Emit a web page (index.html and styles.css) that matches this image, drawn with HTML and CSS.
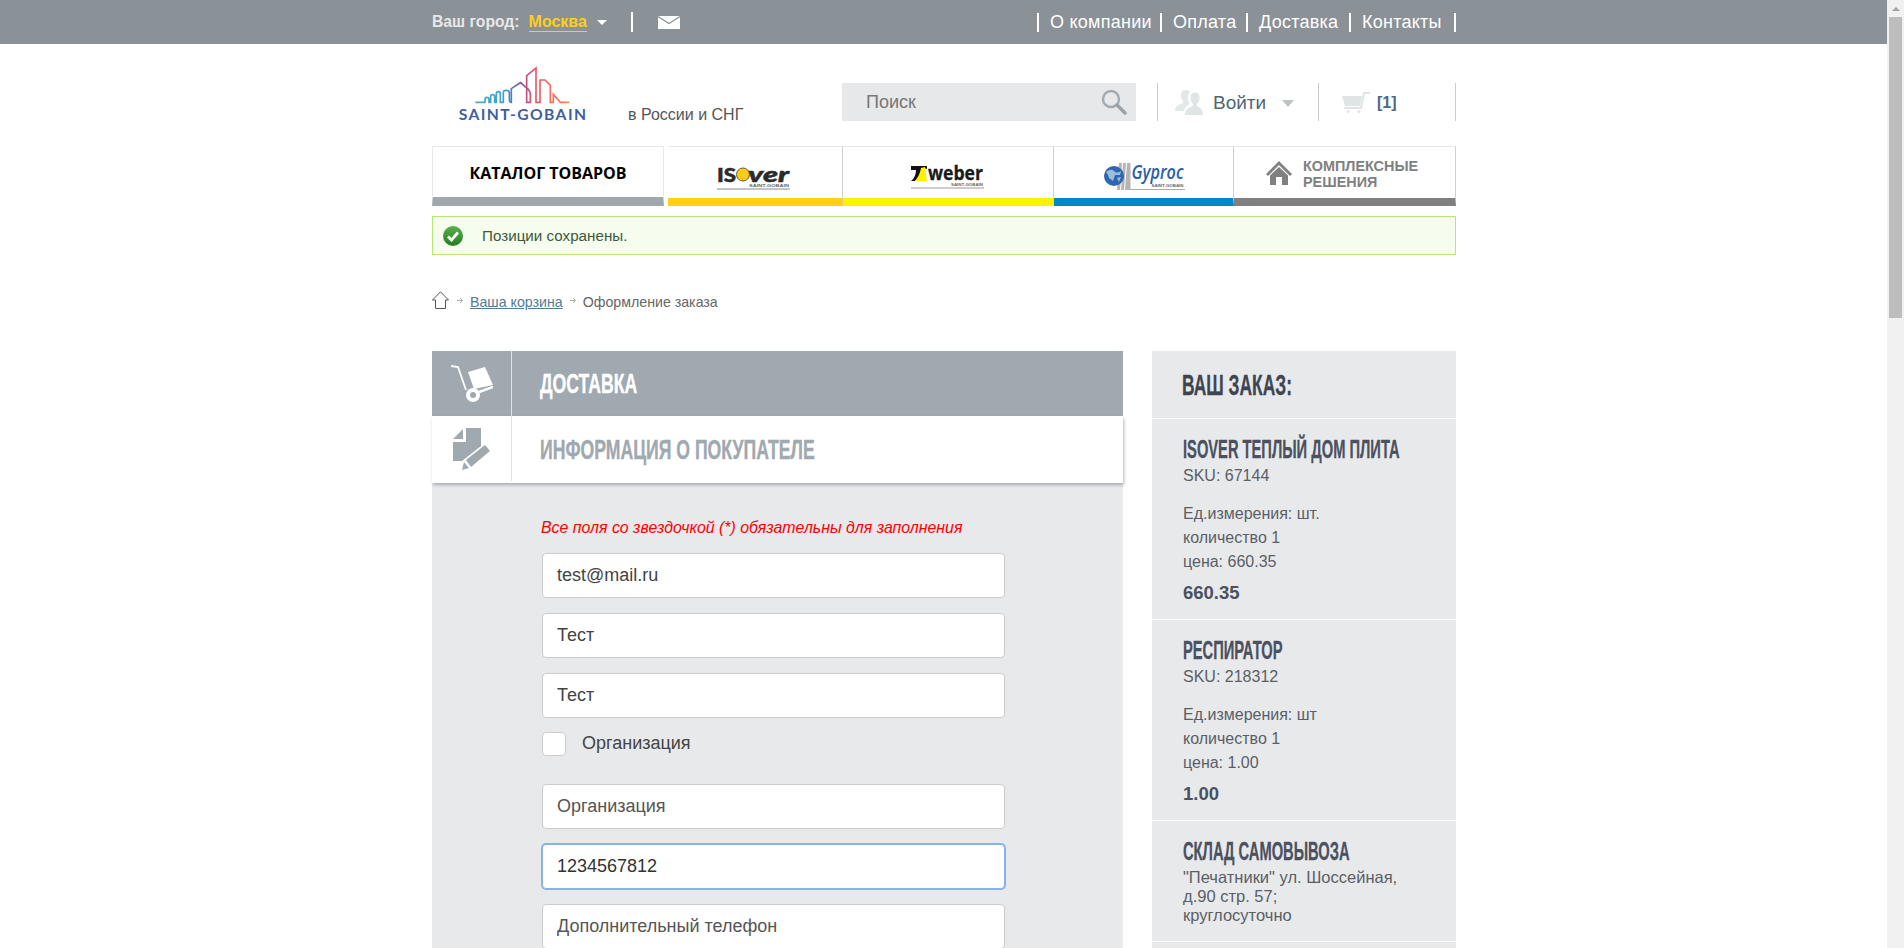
FILE: index.html
```html
<!DOCTYPE html>
<html lang="ru">
<head>
<meta charset="utf-8">
<title>Оформление заказа</title>
<link rel="stylesheet" href="styles.css">
</head>
<body>
<div class="page">
  <div class="topbar">
    <div class="wrap topbar-in">
      <div class="city">
        <span class="city-label">Ваш город:</span>
        <a class="city-name">Москва</a>
        <span class="city-caret"></span>
        <span class="city-sep"></span>
        <svg class="mail" width="22" height="13" viewBox="0 0 22 13"><path d="M0 0H22V13H0Z" fill="#fff"/><path d="M0 .5L11 7.5L22 .5" fill="none" stroke="#8a9197" stroke-width="1.2"/></svg>
      </div>
      <ul class="topnav">
        <li class="nav-about">О компании</li><li class="nav-pay">Оплата</li><li class="nav-ship">Доставка</li><li class="nav-contact">Контакты</li>
      </ul>
    </div>
  </div>

  <div class="wrap">
    <header class="head">
      <svg class="logo" width="145" height="62" viewBox="0 0 435 186">
        <defs><linearGradient id="sky" x1="75" x2="360" y1="0" y2="0" gradientUnits="userSpaceOnUse">
          <stop offset="0" stop-color="#3fb5ad"/><stop offset=".3" stop-color="#3f9fd8"/><stop offset=".47" stop-color="#6b5aa0"/><stop offset=".6" stop-color="#f0506a"/><stop offset="1" stop-color="#fb8a50"/>
        </linearGradient></defs>
        <path d="M76 127H105V118Q105 112 111 112Q117 112 117 118V127H122V110Q122 104 128 104Q134 104 134 110V127H139V101Q139 95 145 95Q151 95 151 101V127H160V97Q160 91 168 91Q178 91 178 97V120Q178 127 184 127V86L212 68L230 84Q241 92 241 104V127H230V47L258 24V127H270V60H285L301 76V127H310V103L331 127H358" fill="none" stroke="url(#sky)" stroke-width="5"/>
        <text class="logo-text" x="26" y="180" textLength="382">SAINT-GOBAIN</text>
      </svg>
      <span class="region">в России и СНГ</span>
      <div class="search">
        <span class="search-text">Поиск</span>
        <svg width="26" height="26" viewBox="0 0 26 26"><circle cx="10" cy="10" r="8" fill="none" stroke="#a3abb1" stroke-width="2.4"/><path d="M16 16L24 24" stroke="#9aa2a8" stroke-width="3.4" stroke-linecap="round"/></svg>
      </div>
      <div class="login">
        <svg width="30" height="26" viewBox="0 0 30 26"><path d="M2 21Q2 17 8 15Q11 14 10 12Q7 9 8 5Q9 1 13 1Q16 1 17.500 3Q14 5 15 10Q15 13 17 15Q12 17 11 22H2Z" fill="#e3e8e8"/><path d="M12 26Q12 20 18 18Q21 17 20 15Q17 12 17.500 8Q18 3.500 22 3.500Q26 3.500 26.500 8Q27 12 24 15Q23 17 26 18Q30 20 30 26Z" fill="#dfe5e5"/></svg>
        <span class="login-text">Войти</span>
        <span class="login-caret"></span>
      </div>
      <div class="cart">
        <svg width="28" height="22" viewBox="0 0 28 22"><path d="M0 5H20L18 15H3Z" fill="#dfe5e5"/><path d="M2.500 17H19L22 2H28" fill="none" stroke="#dfe5e5" stroke-width="2"/><circle cx="6" cy="20.500" r="1.500" fill="#dfe5e5"/><circle cx="17" cy="20.500" r="1.500" fill="#dfe5e5"/></svg>
        <span class="cart-count">[1]</span>
      </div>
    </header>

    <nav class="tabs">
      <a class="tab tab-catalog"><span class="tab-body catalog-text">КАТАЛОГ ТОВАРОВ</span></a>
      <a class="tab tab-isover"><span class="tab-body">
        <svg class="brand" width="76" height="34" viewBox="0 0 76 34">
          <text class="isover-caps" x="0" y="26" textLength="19" lengthAdjust="spacingAndGlyphs">IS</text>
          <circle cx="26" cy="18.500" r="6.500" fill="#ffcb16" stroke="#5f5a3a" stroke-width="1"/>
          <text class="isover" x="31" y="26" textLength="41" lengthAdjust="spacingAndGlyphs">ver</text>
          <text class="tiny" x="32" y="31" textLength="40" lengthAdjust="spacingAndGlyphs">SAINT-GOBAIN</text>
          <path d="M0 33H73" stroke="#888" stroke-width="1"/>
        </svg>
      </span></a>
      <a class="tab tab-weber"><span class="tab-body">
        <svg class="brand" width="76" height="34" viewBox="0 0 76 34">
          <path d="M1 10H17V13L13 12Q11 20 5 25H1Q6 21 6 14H1Z" fill="#111"/><path d="M11 12L15 11L17 25H5Q10 19 11 12Z" fill="#fff200"/>
          <text class="weber" x="18" y="24" textLength="55" lengthAdjust="spacingAndGlyphs">weber</text>
          <text class="tiny" x="41" y="30" textLength="32" lengthAdjust="spacingAndGlyphs">SAINT-GOBAIN</text>
          <path d="M1 32H74" stroke="#999" stroke-width="1"/>
        </svg>
      </span></a>
      <a class="tab tab-gyproc"><span class="tab-body">
        <svg class="brand" width="82" height="34" viewBox="0 0 82 34">
          <path d="M16 7H19L17 34H14ZM20 7H23L21 34H18ZM24 7H27.500V34H22Z" fill="#b5b5b5"/>
          <path d="M27 33.500H82" stroke="#aaa" stroke-width="1"/>
          <circle cx="11" cy="20" r="10" fill="#2f66ad"/><path d="M3 16Q8 12 11 15T18 15L17 19L12 19L10 25L6 22L5 19Z M14 22L18 21L16 26Z" fill="#9dbde0"/>
          <text class="gyproc" x="28.500" y="23" textLength="52" lengthAdjust="spacingAndGlyphs">Gyproc</text>
          <text class="tiny" x="48.500" y="31" textLength="32" lengthAdjust="spacingAndGlyphs">SAINT-GOBAIN</text>
        </svg>
      </span></a>
      <a class="tab tab-complex"><span class="tab-body complex-body">
        <svg width="26" height="24" viewBox="0 0 26 24"><path d="M13 0L26 13L24 15L13 4L2 15L0 13Z" fill="#808080"/><path d="M4 14.500L13 6L22 14.500V24H16V16H10V24H4Z" fill="#808080"/></svg>
        <span class="complex-text">КОМПЛЕКСНЫЕ<br>РЕШЕНИЯ</span>
      </span></a>
    </nav>

    <div class="alert">
      <svg width="20" height="20" viewBox="0 0 20 20"><defs><linearGradient id="ok" x1="0" x2="0" y1="0" y2="1"><stop offset="0" stop-color="#5cb04a"/><stop offset="1" stop-color="#237d25"/></linearGradient></defs><circle cx="10" cy="10" r="10" fill="url(#ok)"/><path d="M5 10.500L8.500 14L15 6.500" fill="none" stroke="#fff" stroke-width="2.800"/></svg>
      <span>Позиции сохранены.</span>
    </div>

    <div class="crumbs">
      <svg width="17" height="18" viewBox="0 0 17 18"><path d="M.5 9L8.500 .8L16.500 9H13.500V17.500H3.500V9Z" fill="none" stroke="#555" stroke-width="1"/></svg>
      <svg class="crumb-arrow" width="6" height="7" viewBox="0 0 6 7"><path d="M0 3.500H5.500M3 1L5.500 3.500L3 6" fill="none" stroke="#aaa" stroke-width="1"/></svg>
      <a class="crumb-link">Ваша корзина</a>
      <svg class="crumb-arrow" width="6" height="7" viewBox="0 0 6 7"><path d="M0 3.500H5.500M3 1L5.500 3.500L3 6" fill="none" stroke="#aaa" stroke-width="1"/></svg>
      <span class="crumb-text">Оформление заказа</span>
    </div>

    <main class="columns">
      <section class="checkout">
        <div class="step step-done">
          <div class="step-icon">
            <svg width="42" height="38" viewBox="0 0 42 38"><path d="M0 1L7 2L15 25" fill="none" stroke="#fff" stroke-width="1.800"/><path d="M17 7L34 2L42 20L23 24Z" fill="#fff"/><path d="M28 27L42 22" stroke="#fff" stroke-width="2.500"/><circle cx="22" cy="30" r="5" fill="none" stroke="#fff" stroke-width="4"/></svg>
          </div>
          <h2 class="step-title"><span class="squeeze step-squeeze">ДОСТАВКА</span></h2>
        </div>
        <div class="step step-active">
          <div class="step-icon">
            <svg width="38" height="43" viewBox="0 0 38 43"><path d="M0 12H10V2Z" fill="#a0a8b0"/><path d="M13 1H28V19L9 34H0V15H13Z" fill="#a0a8b0"/><path d="M32 18L37 24L18 40L13 33Z" fill="#a0a8b0"/><path d="M11 35L16 41L9 43Z" fill="#a0a8b0"/></svg>
          </div>
          <h2 class="step-title"><span class="squeeze step-squeeze">ИНФОРМАЦИЯ О ПОКУПАТЕЛЕ</span></h2>
        </div>
        <form class="form">
          <p class="required">Все поля со звездочкой (*) обязательны для заполнения</p>
          <input class="field" type="text" value="test@mail.ru">
          <input class="field" type="text" value="Тест">
          <input class="field" type="text" value="Тест">
          <label class="check"><span class="check-box"></span><span class="check-label">Организация</span></label>
          <input class="field" type="text" placeholder="Организация">
          <input class="field field-focus" type="text" value="1234567812">
          <input class="field" type="text" placeholder="Дополнительный телефон">
        </form>
      </section>

      <aside class="order">
        <h2 class="order-title"><span class="squeeze">ВАШ ЗАКАЗ:</span></h2>
        <div class="order-item">
          <h3 class="item-title"><span class="squeeze item-squeeze">ISOVER ТЕПЛЫЙ ДОМ ПЛИТА</span></h3>
          <p class="item-sku">SKU: 67144</p>
          <p class="item-meta">Ед.измерения: шт.<br>количество 1<br>цена: 660.35</p>
          <p class="item-price">660.35</p>
        </div>
        <div class="order-item">
          <h3 class="item-title"><span class="squeeze item-squeeze">РЕСПИРАТОР</span></h3>
          <p class="item-sku">SKU: 218312</p>
          <p class="item-meta">Ед.измерения: шт<br>количество 1<br>цена: 1.00</p>
          <p class="item-price">1.00</p>
        </div>
        <div class="order-item">
          <h3 class="item-title"><span class="squeeze item-squeeze">СКЛАД САМОВЫВОЗА</span></h3>
          <p class="item-sku item-address">"Печатники" ул. Шоссейная,<br>д.90 стр. 57;<br>круглосуточно</p>
        </div>
      </aside>
    </main>
  </div>
</div>
<div class="scrollbar">
  <span class="scroll-arrow"></span>
  <span class="scroll-thumb"></span>
</div>
</body>
</html>
```

FILE: styles.css
```css
* { box-sizing: border-box; }
html, body { height: 100%; margin: 0; }
body {
  display: flex;
  overflow: hidden;
  font-family: "Liberation Sans", Arial, sans-serif;
  color: #555;
  background: #fff;
}
h2, h3, p, ul { margin: 0; padding: 0; }
.page { flex: 1; min-width: 0; height: 948px; overflow: hidden; }
.wrap { width: 1024px; margin-left: 432px; }

/* scrollbar */
.scrollbar { width: 17px; background: #f1f1f1; display: flex; flex-direction: column; align-items: center; }
.scroll-arrow { margin-top: 7px; border: 4px solid transparent; border-top: 0; border-bottom: 4px solid #a3a3a3; }
.scroll-thumb { margin-top: 6px; width: 13px; height: 301px; background: #bdbdbd; }

/* top bar */
.topbar { height: 44px; background: #8a9197; }
.topbar-in { height: 44px; display: flex; justify-content: space-between; align-items: center; }
.city { display: flex; align-items: center; }
.city-label { font-size: 15.700px; font-weight: 700; color: #e8e8e8; }
.city-name { margin-left: 9px; font-size: 16px; font-weight: 700; color: #ffcd1c; border-bottom: 1px solid #ffcd1c; line-height: 18px; }
.city-caret { margin-left: 10px; border: 5.500px solid transparent; border-bottom: 0; border-top: 5px solid #fff; }
.city-sep { margin-left: 24px; width: 2px; height: 20px; background: #fff; }
.mail { margin-left: 25px; }
.topnav { display: flex; list-style: none; color: #fff; font-size: 18px; letter-spacing: .25px; }
.topnav li { height: 19px; line-height: 19px; padding-left: 11px; border-left: 2px solid #fff; }
.topnav li:last-child { border-right: 2px solid #fff; }
.nav-about { width: 123px; }
.nav-pay { width: 86px; }
.nav-ship { width: 103px; }
.nav-contact { width: 107px; }

/* header */
.head { height: 77px; display: flex; align-items: flex-end; }
.logo { margin-left: 18px; margin-bottom: -1px; }
.logo-text { font: 700 47px "Lato", sans-serif; fill: #3c5f9f; }
.region { margin-left: 33px; margin-bottom: -2px; font-size: 16px; line-height: 16px; color: #555; }
.search { margin-left: auto; width: 294px; height: 38px; background: #e7e8ea; display: flex; align-items: center; justify-content: space-between; padding: 0 9px 0 24px; }
.search-text { font-size: 18px; color: #777; }
.login { margin-left: 21px; width: 161px; height: 38px; border-left: 1px solid #ccc; display: flex; align-items: center; padding-left: 15px; }
.login-text { margin-left: 10px; padding-top: 2px; font-size: 19px; color: #4f6675; }
.login-caret { margin-left: 16px; margin-top: 2px; border: 6px solid transparent; border-bottom: 0; border-top: 7px solid #bfc3c5; }
.cart { width: 138px; height: 38px; border-left: 1px solid #ccc; border-right: 1px solid #ccc; display: flex; align-items: center; padding-left: 23px; }
.cart-count { margin-left: 7px; padding-top: 2px; font-size: 16px; font-weight: 700; color: #4a6a80; }

/* tabs */
.tabs { margin-top: 25px; height: 60px; display: flex; }
.tab { height: 60px; display: flex; flex-direction: column; border-top: 1px solid #e8e8e8; border-right: 1px solid #d0d0d0; border-bottom: 8px solid; border-bottom-color: #999; }
.tab-body { flex: 1; display: flex; align-items: center; justify-content: center; }
.brand { overflow: visible; }
.tab-catalog { width: 232px; margin-right: 4px; border: 1px solid #e8e8e8; border-bottom: 9px solid #9fa7af; }
.catalog-text { padding-top: 2px; font-size: 16px; font-weight: 700; color: #000; font-family: "Open Sans", sans-serif; }
.tab-isover { width: 175px; border-bottom-color: #ffd014; }
.tab-weber { width: 211px; border-bottom-color: #fff200; }
.tab-gyproc { width: 180px; border-bottom-color: #0088cc; }
.tab-complex { width: 222px; border-bottom-color: #808080; }
.complex-body { justify-content: flex-start; padding-left: 32px; gap: 11px; }
.complex-text { padding-top: 3px; font-size: 14.400px; line-height: 16px; font-weight: 700; color: #808080; }
.isover-caps { font: 900 18px "Lato", sans-serif; fill: #2b2b2b; stroke: #2b2b2b; stroke-width: .5px; }
.isover { font: italic 900 21px "Lato", sans-serif; fill: #2b2b2b; stroke: #2b2b2b; stroke-width: .5px; }
.weber { font: 700 20px "Open Sans", sans-serif; fill: #1a1a1a; stroke: #1a1a1a; stroke-width: .3px; }
.gyproc { font: italic 600 20px "Open Sans", sans-serif; fill: #2a5ea8; }
.tiny { font: 700 4px "Liberation Sans", sans-serif; fill: #666; }

/* alert */
.alert { margin-top: 10px; height: 39px; border: 1px solid #b5e878; background: #f6fdee; display: flex; align-items: center; padding-left: 10px; gap: 19px; font-size: 15.200px; color: #3d5a3a; }

/* breadcrumbs */
.crumbs { margin-top: 36px; height: 18px; display: flex; align-items: center; font-size: 14.200px; color: #666; }
.crumb-arrow { margin: 0 7px 0 8px; }
.crumb-link { padding-top: 5px; line-height: 15px; color: #557a90; text-decoration: underline; }
.crumb-text { padding-top: 5px; line-height: 15px; }
.crumbs .crumb-link + .crumb-arrow { margin-left: 7px; }

/* columns */
.columns { margin-top: 42px; display: flex; justify-content: space-between; align-items: flex-start; }
.checkout { width: 691px; }
.step { display: flex; align-items: stretch; }
.step-icon { width: 80px; flex: none; border-right: 1px solid #e0e2e4; display: flex; align-items: center; justify-content: center; }
.step-title { padding-left: 28px; font-size: 28px; line-height: 1; font-weight: 700; white-space: nowrap; align-self: center; }
.step-done { height: 65px; background: #a0a8b0; }
.step-done .step-title { color: #fff; }
.step-active { height: 67px; background: #fff; position: relative; box-shadow: 1px 2px 3px rgba(90, 100, 110, .45); }
.step-active .step-title { color: #a0a8b0; }
.step-active .step-icon { height: 65px; }
.form { height: 465px; background: #e8e9eb; padding: 36px 0 0 110px; }
.required { margin-left: -1px; font-size: 15.900px; line-height: 18px; font-style: italic; color: #f00; margin-bottom: 16px; }
.field { display: block; width: 463px; height: 45px; margin-bottom: 15px; padding: 0 14px; border: 1px solid #ccc; border-radius: 4px; background: #fff; font: 18px "Liberation Sans", sans-serif; color: #444; outline: 0; }
.field::placeholder { color: #555; opacity: 1; }
.field-focus { border-color: #8ab0ea; box-shadow: 0 0 0 1px #8ab0ea; color: #333; }
.check { display: flex; align-items: center; height: 24px; margin: -1px 0 28px; font-size: 18px; color: #444; gap: 16px; }
.check-box { width: 24px; height: 24px; border: 1px solid #ccc; border-radius: 4px; background: #fff; }
.check-label { padding-bottom: 2px; }

/* order */
.order { width: 304px; height: 597px; background: #e8e9eb; }
.order-title { height: 68px; border-bottom: 1px solid #fff; padding: 19px 0 0 30px; font-size: 29px; line-height: 30px; font-weight: 700; color: #3f4550; white-space: nowrap; }
.squeeze { display: inline-block; transform: scaleX(.6); transform-origin: 0 50%; -webkit-text-stroke: .3px currentColor; }
.step-squeeze { transform: scaleX(.63); -webkit-text-stroke: .4px currentColor; }
.item-squeeze { transform: scaleX(.565); }
.order-item { padding: 20px 0 14px 31px; border-bottom: 1px solid #fff; }
.item-title { font-size: 26px; line-height: 20px; font-weight: 700; color: #4b5160; white-space: nowrap; }
.item-sku { margin-top: 7px; font-size: 16px; line-height: 20px; color: #5a5f66; }
.item-meta { margin-top: 16px; font-size: 16px; line-height: 24px; color: #5a5f66; }
.item-price { margin-top: 7px; font-size: 18.500px; line-height: 24px; font-weight: 700; color: #4b5160; }
.item-address { font-size: 16.500px; line-height: 19px; margin-bottom: 2px; }
```
